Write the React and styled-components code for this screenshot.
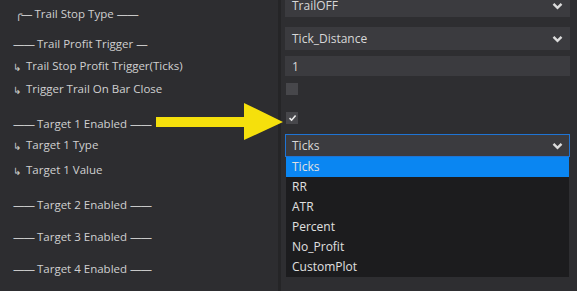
import React from "react";
import styled, { createGlobalStyle } from "styled-components";

const GlobalStyle = createGlobalStyle`
  html, body {
    margin: 0;
    padding: 0;
    background: #2d2d30;
  }
  body {
    font-family: "Open Sans", "Noto Sans", sans-serif;
  }
`;

const Grid = styled.div`
  position: relative;
  width: 577px;
  height: 291px;
  overflow: hidden;
  display: flex;
  background: #2d2d30;
  color: #d0d0d0;
  font-size: 11.5px;
`;

const LabelColumn = styled.div`
  width: 278px;
  display: flex;
  flex-direction: column;
`;

const Divider = styled.div`
  width: 3px;
  background: #252527;
`;

const EditorColumn = styled.div`
  position: relative;
  flex: 1;
  display: flex;
  flex-direction: column;
  padding: 0 7px 0 4px;
  background: #2e2e31;
`;

const Label = styled.div`
  height: 20px;
  line-height: 20px;
  margin-top: ${(p) => p.$top}px;
  padding-left: ${(p) => (p.$corner ? 15 : 13)}px;
  white-space: nowrap;
`;

const Dash = styled.span`
  letter-spacing: -1px;
  color: #c8c8c8;
`;

const Hook = styled.span`
  display: inline-block;
  width: 13px;
  font-size: 10px;
  color: #cacaca;
  vertical-align: -1px;
`;

const Select = styled.div`
  box-sizing: border-box;
  height: 23px;
  margin-top: ${(p) => p.$top}px;
  padding: 0 6px;
  display: flex;
  align-items: center;
  justify-content: space-between;
  background: #3b3b3f;
  border: 1px solid ${(p) => (p.$focused ? "#1f74d4" : "#3b3b3f")};
  color: #d8d8d8;
  font-size: 12px;
`;

const TextBox = styled.div`
  box-sizing: border-box;
  height: 20px;
  margin-top: ${(p) => p.$top}px;
  padding: 0 7px;
  display: flex;
  align-items: center;
  background: #3b3b3f;
  color: #d8d8d8;
  font-size: 12px;
`;

const Check = styled.div`
  width: 12px;
  height: 12px;
  margin: ${(p) => p.$top}px 0 0 1px;
  display: flex;
  align-items: center;
  justify-content: center;
  background: #47474b;
`;

const List = styled.div`
  position: absolute;
  top: 157px;
  left: 5px;
  right: 8px;
  display: flex;
  flex-direction: column;
  background: #1c1c1e;
  font-size: 12px;
`;

const Option = styled.div`
  height: 20px;
  line-height: 20px;
  padding-left: 6px;
  color: #e0e0e0;
  background: ${(p) => (p.$active ? "#0a86f2" : "transparent")};
`;

const Pointer = styled.svg`
  position: absolute;
  left: 0;
  top: 0;
  pointer-events: none;
`;

const Chevron = () => (
  <svg width="11" height="8" viewBox="0 0 11 8">
    <polyline points="1.5,1.8 5.5,5.8 9.5,1.8" fill="none" stroke="#dcdcdc" strokeWidth="2.4" />
  </svg>
);

const Tick = () => (
  <svg width="9" height="8" viewBox="0 0 9 8">
    <polyline points="1.5,4.2 3.6,6.2 7.6,1.6" fill="none" stroke="#ececec" strokeWidth="1.6" />
  </svg>
);

const labels = [
  { text: "Trail Stop Type", top: 4, lead: "╭—", tail: "——", corner: true },
  { text: "Trail Profit Trigger", top: 10, lead: "——", tail: "—" },
  { text: "Trail Stop Profit Trigger(Ticks)", top: 2, sub: true },
  { text: "Trigger Trail On Bar Close", top: 3, sub: true },
  { text: "Target 1 Enabled", top: 15, lead: "——", tail: "——" },
  { text: "Target 1 Type", top: 1, sub: true },
  { text: "Target 1 Value", top: 5, sub: true },
  { text: "Target 2 Enabled", top: 15, lead: "——", tail: "——" },
  { text: "Target 3 Enabled", top: 12, lead: "——", tail: "——" },
  { text: "Target 4 Enabled", top: 12, lead: "——", tail: "——" },
];

const options = ["Ticks", "RR", "ATR", "Percent", "No_Profit", "CustomPlot"];

export default function App() {
  return (
    <>
      <GlobalStyle />
      <Grid>
        <LabelColumn>
          {labels.map((l) => (
            <Label key={l.text} $top={l.top} $corner={l.corner}>
              {l.sub && <Hook>↳</Hook>}
              {l.lead && <Dash>{l.lead}</Dash>}
              {l.lead ? ` ${l.text} ` : l.text}
              {l.tail && <Dash>{l.tail}</Dash>}
            </Label>
          ))}
        </LabelColumn>
        <Divider />
        <EditorColumn>
          <Select $top={-6}>
            TrailOFF
            <Chevron />
          </Select>
          <Select $top={10}>
            Tick_Distance
            <Chevron />
          </Select>
          <TextBox $top={6}>1</TextBox>
          <Check $top={7} />
          <Check $top={17}>
            <Tick />
          </Check>
          <Select $top={10} $focused>
            Ticks
            <Chevron />
          </Select>
          <List>
            {options.map((o, i) => (
              <Option key={o} $active={i === 0}>
                {o}
              </Option>
            ))}
          </List>
        </EditorColumn>
        <Pointer width="577" height="291" viewBox="0 0 577 291">
          <polygon
            points="156,117 244,117 244,103 283,122 244,140 244,127 156,127"
            fill="#f5e00c"
          />
        </Pointer>
      </Grid>
    </>
  );
}
